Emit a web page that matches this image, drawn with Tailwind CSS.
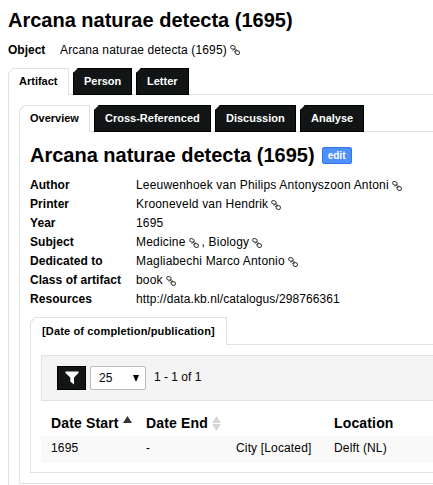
<!DOCTYPE html>
<html lang="en">
<head>
    <meta charset="UTF-8">
    <meta name="viewport" content="width=device-width, initial-scale=1.0">
    <title>Arcana naturae detecta (1695)</title>
    <script src="https://cdn.jsdelivr.net/npm/@tailwindcss/browser@4"></script>
</head>
<body class="h-[485px] overflow-hidden bg-white font-['Liberation_Sans',Arial,sans-serif] text-[12px] text-black">
    <!-- Link icon, reused after every referenced object -->
    <svg class="hidden">
        <symbol id="link" viewBox="0 0 10 10">
            <g fill="none" stroke="#444" stroke-width="1">
                <ellipse cx="2.9" cy="2.4" rx="2.3" ry="1.7" transform="rotate(20 2.9 2.4)"/>
                <ellipse cx="7.3" cy="7.5" rx="2.2" ry="1.9" transform="rotate(20 7.3 7.5)"/>
                <path d="M2.6 5.6L5.4 3.4M4.4 6.6L7 4.6M4.2 3.6L6.2 6.4"/>
            </g>
        </symbol>
    </svg>

    <header class="pl-2">
        <h1 class="h-10 pt-1 text-[20px] leading-8 font-bold whitespace-nowrap">Arcana naturae detecta (1695)</h1>
        <div class="flex h-7 items-start leading-5">
            <h2 class="w-[52px] font-bold">Object</h2>
            <p class="flex items-center tracking-[0.14px] whitespace-nowrap">Arcana naturae detecta (1695)<svg class="ml-[3px] size-[10px]"><use href="#link"/></svg></p>
        </div>
    </header>

    <main class="w-full overflow-hidden pl-2">
        <nav class="relative -mb-px flex h-[27px] gap-1 text-[11px] leading-[25px] font-bold whitespace-nowrap">
            <a class="w-[61px] bg-[#e1e1e1] px-px pt-px [clip-path:polygon(5px_0,100%_0,100%_100%,0_100%,0_5px)]"><span class="block h-[26px] bg-white pl-[10px] [clip-path:polygon(4.5px_0,100%_0,100%_100%,0_100%,0_4.5px)]">Artifact</span></a>
            <a class="w-[59px] border border-black bg-[#111516] pl-[10px] text-white [clip-path:polygon(5px_0,100%_0,100%_100%,0_100%,0_5px)]">Person</a>
            <a class="w-[53px] border border-black bg-[#111516] pl-[10px] text-white [clip-path:polygon(5px_0,100%_0,100%_100%,0_100%,0_5px)]">Letter</a>
        </nav>
        <section class="h-[410px] border-t border-l border-[#e1e1e1] pt-[10px] pl-[10px]">
            <nav class="relative -mb-px flex h-[27px] gap-1 text-[11px] leading-[25px] font-bold whitespace-nowrap">
                <a class="w-[71px] bg-[#e1e1e1] px-px pt-px [clip-path:polygon(5px_0,100%_0,100%_100%,0_100%,0_5px)]"><span class="block h-[26px] bg-white pl-[10px] [clip-path:polygon(4.5px_0,100%_0,100%_100%,0_100%,0_4.5px)]">Overview</span></a>
                <a class="w-[117px] border border-black bg-[#111516] pl-[10px] text-white [clip-path:polygon(5px_0,100%_0,100%_100%,0_100%,0_5px)]">Cross-Referenced</a>
                <a class="w-[81px] border border-black bg-[#111516] pl-[10px] text-white [clip-path:polygon(5px_0,100%_0,100%_100%,0_100%,0_5px)]">Discussion</a>
                <a class="w-[64px] border border-black bg-[#111516] pl-[10px] text-white [clip-path:polygon(5px_0,100%_0,100%_100%,0_100%,0_5px)]">Analyse</a>
            </nav>
            <section class="h-[353px] border-y border-l border-[#e1e1e1] pt-[7px] pl-[10px]">
                <div class="flex h-[37px] gap-[7px]">
                    <h1 class="text-[20px] leading-8 font-bold whitespace-nowrap">Arcana naturae detecta (1695)</h1>
                    <button class="mt-2 h-[17px] w-[30px] rounded-[2px] border border-[#3079ed] bg-[#4d90fe] text-center text-[10px] leading-[15px] font-bold text-white">edit</button>
                </div>
                <dl class="grid grid-cols-[106px_1fr] leading-[19px] tracking-[0.19px] whitespace-nowrap">
                    <dt class="font-bold tracking-[0.06px]">Author</dt>
                    <dd class="flex items-center">Leeuwenhoek van Philips Antonyszoon Antoni<svg class="ml-[3px] size-[10px]"><use href="#link"/></svg></dd>
                    <dt class="font-bold tracking-[0.06px]">Printer</dt>
                    <dd class="flex items-center">Krooneveld van Hendrik<svg class="ml-[3px] size-[10px]"><use href="#link"/></svg></dd>
                    <dt class="font-bold tracking-[0.06px]">Year</dt>
                    <dd>1695</dd>
                    <dt class="font-bold tracking-[0.06px]">Subject</dt>
                    <dd class="flex items-center">Medicine<svg class="mr-[3px] ml-[3px] size-[10px]"><use href="#link"/></svg>, Biology<svg class="ml-[3px] size-[10px]"><use href="#link"/></svg></dd>
                    <dt class="font-bold tracking-[0.06px]">Dedicated to</dt>
                    <dd class="flex items-center">Magliabechi Marco Antonio<svg class="ml-[3px] size-[10px]"><use href="#link"/></svg></dd>
                    <dt class="font-bold tracking-[0.06px]">Class of artifact</dt>
                    <dd class="flex items-center">book<svg class="ml-[3px] size-[10px]"><use href="#link"/></svg></dd>
                    <dt class="font-bold tracking-[0.06px]">Resources</dt>
                    <dd class="tracking-[0.1px]">http://data.kb.nl/catalogus/298766361</dd>
                </dl>
                <nav class="relative mt-2 -mb-px flex h-[28px] text-[11px] leading-[26px] font-bold tracking-[0.15px] whitespace-nowrap">
                    <a class="w-[197px] bg-[#e1e1e1] px-px pt-px [clip-path:polygon(5px_0,100%_0,100%_100%,0_100%,0_5px)]"><span class="block h-[27px] bg-white pl-[11px] [clip-path:polygon(4.5px_0,100%_0,100%_100%,0_100%,0_4.5px)]">[Date of completion/publication]</span></a>
                </nav>
                <section class="h-[129px] border-y border-l border-[#e1e1e1] pt-[10px] pl-[10px]">
                    <div class="flex h-[46px] border-y border-l border-[#e1e1e1] bg-[#f4f4f4] pt-[10px] pl-[15px]">
                        <button class="flex h-6 w-[29px] items-center justify-center border border-black bg-[#111516]">
                            <svg class="h-[14px] w-[14px]" viewBox="0 0 14 14" fill="#fff"><path d="M0.5 0.5H13.5V2L9 6.5V13.5L5.3 10.5V6.5L0.5 2Z"/></svg>
                        </button>
                        <div class="ml-1 flex h-6 w-14 items-center justify-between rounded-[2px] border border-[#bbb] bg-white pr-[6px] pl-2">
                            <span>25</span>
                            <svg class="h-[6px] w-[6px]" viewBox="0 0 6 6"><path d="M0 0H6L3.5 6H2.5Z"/></svg>
                        </div>
                        <span class="ml-2 leading-[22px]">1 - 1 of 1</span>
                    </div>
                    <table class="w-full table-fixed text-left whitespace-nowrap">
                        <thead>
                            <tr class="h-[34px] text-[14px] tracking-[0.15px]">
                                <th class="w-[95px] pt-[9px] pl-[10px]"><span class="flex leading-[26px]">Date Start<svg class="mt-[6px] ml-1 h-[7px] w-[9px] shrink-0" viewBox="0 0 9 7"><path fill="#333" d="M4.5 0L9 7H0Z"/></svg></span></th>
                                <th class="w-[90px] pt-[9px] pl-[10px]"><span class="flex leading-[26px]">Date End<svg class="mt-[6px] ml-1 h-[15px] w-[9px] shrink-0" viewBox="0 0 9 15"><path fill="#d6d6d6" d="M4.5 0L9 7H0ZM0 8H9L4.5 15Z"/></svg></span></th>
                                <th class="w-[98px]"></th>
                                <th class="pt-[9px] pl-[10px] leading-[26px]">Location</th>
                            </tr>
                        </thead>
                        <tbody>
                            <tr class="h-[27px] bg-[#f9f9f9] leading-[25px] tracking-[0.15px]">
                                <td class="pb-[2px] pl-[10px]">1695</td>
                                <td class="pb-[2px] pl-[10px]">-</td>
                                <td class="pb-[2px] pl-[10px]">City [Located]</td>
                                <td class="pb-[2px] pl-[10px]">Delft (NL)</td>
                            </tr>
                        </tbody>
                    </table>
                </section>
            </section>
        </section>
    </main>
</body>
</html>
